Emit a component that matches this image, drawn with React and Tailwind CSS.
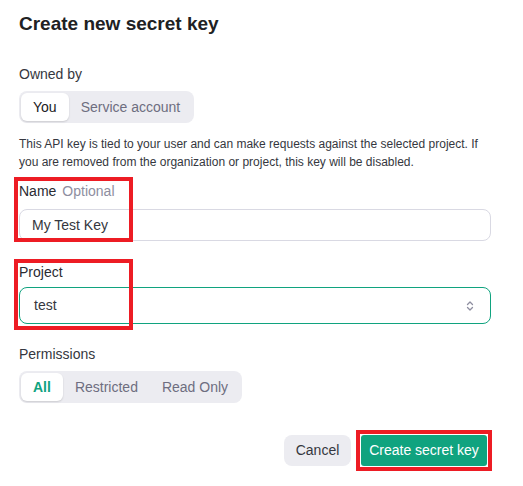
import React from 'react';

function Segmented({ options, active, activeClass }) {
  return (
    <div className="inline-flex items-center rounded-lg bg-[#ececf1] p-[2px]">
      {options.map((opt) => (
        <div
          key={opt}
          className={
            opt === active
              ? `rounded-md bg-white px-[12px] h-[28px] flex items-center shadow-[0_1px_2px_rgba(0,0,0,0.14)] ${activeClass}`
              : 'px-[12px] h-[28px] flex items-center text-[#6e6e80]'
          }
        >
          {opt}
        </div>
      ))}
    </div>
  );
}

function RedMark({ className }) {
  return <div className={`pointer-events-none absolute border-[4px] border-[#ed1c24] ${className}`} />;
}

export default function App() {
  return (
    <div className="relative w-[523px] h-[486px] bg-white pl-[19px] pr-[32px] text-[#353740] font-['Liberation_Sans','Arial',sans-serif]">
      <h1 className="pt-[10px] text-[19px] leading-[28px] font-bold text-[#202123]">
        Create new secret key
      </h1>

      <p className="mt-[26px] text-[14px] leading-[20px]">Owned by</p>
      <div className="mt-[7px] text-[14px]">
        <Segmented options={['You', 'Service account']} active="You" activeClass="text-[#202123]" />
      </div>

      <p className="mt-[12px] text-[12px] leading-[18px] text-[#353740] whitespace-nowrap">
        This API key is tied to your user and can make requests against the selected project. If
        <br />
        you are removed from the organization or project, this key will be disabled.
      </p>

      {/* Name */}
      <div className="relative mt-[10px]">
        <div className="text-[14px] leading-[20px]">
          <span className="text-[#2a2b32]">Name</span>
          <span className="ml-[6px] text-[#8e8ea0]">Optional</span>
        </div>
        <div className="mt-[8px] h-[32px] rounded-lg border border-[#d9d9e3] flex items-center px-[12px] text-[14px] text-[#353740]">
          My Test Key
        </div>
        <RedMark className="left-[-5px] top-[-4px] w-[119px] h-[65px]" />
      </div>

      {/* Project */}
      <div className="relative mt-[21px]">
        <div className="text-[14px] leading-[20px] text-[#2a2b32]">Project</div>
        <div className="mt-[5px] h-[37px] rounded-lg border-[1.5px] border-[#10a37f] flex items-center justify-between pl-[14px] pr-[15px] text-[14px] text-[#353740]">
          <span>test</span>
          <svg width="10" height="12" viewBox="0 0 10 12" fill="none" stroke="#8e8ea0" strokeWidth="1.3" strokeLinecap="round" strokeLinejoin="round">
            <path d="M2.5 4.5 5 2l2.5 2.5" />
            <path d="M2.5 7.5 5 10l2.5-2.5" />
          </svg>
        </div>
        <RedMark className="left-[-5px] top-[-3px] w-[119px] h-[71px]" />
      </div>

      <p className="mt-[20px] text-[14px] leading-[20px]">Permissions</p>
      <div className="mt-[7px] text-[14px]">
        <Segmented options={['All', 'Restricted', 'Read Only']} active="All" activeClass="text-[#10a37f] font-bold" />
      </div>

      <div className="mt-[32px] flex justify-end gap-[10px] pr-[4px]">
        <button className="h-[31px] w-[67px] rounded-lg bg-[#ececf1] text-[14px] text-[#353740]">
          Cancel
        </button>
        <div className="relative">
          <button className="h-[31px] w-[126px] rounded-[3px] bg-[#10a37f] text-[14px] text-white">
            Create secret key
          </button>
          <RedMark className="left-[-5px] top-[-5px] right-[-5px] bottom-[-5px]" />
        </div>
      </div>
    </div>
  );
}
